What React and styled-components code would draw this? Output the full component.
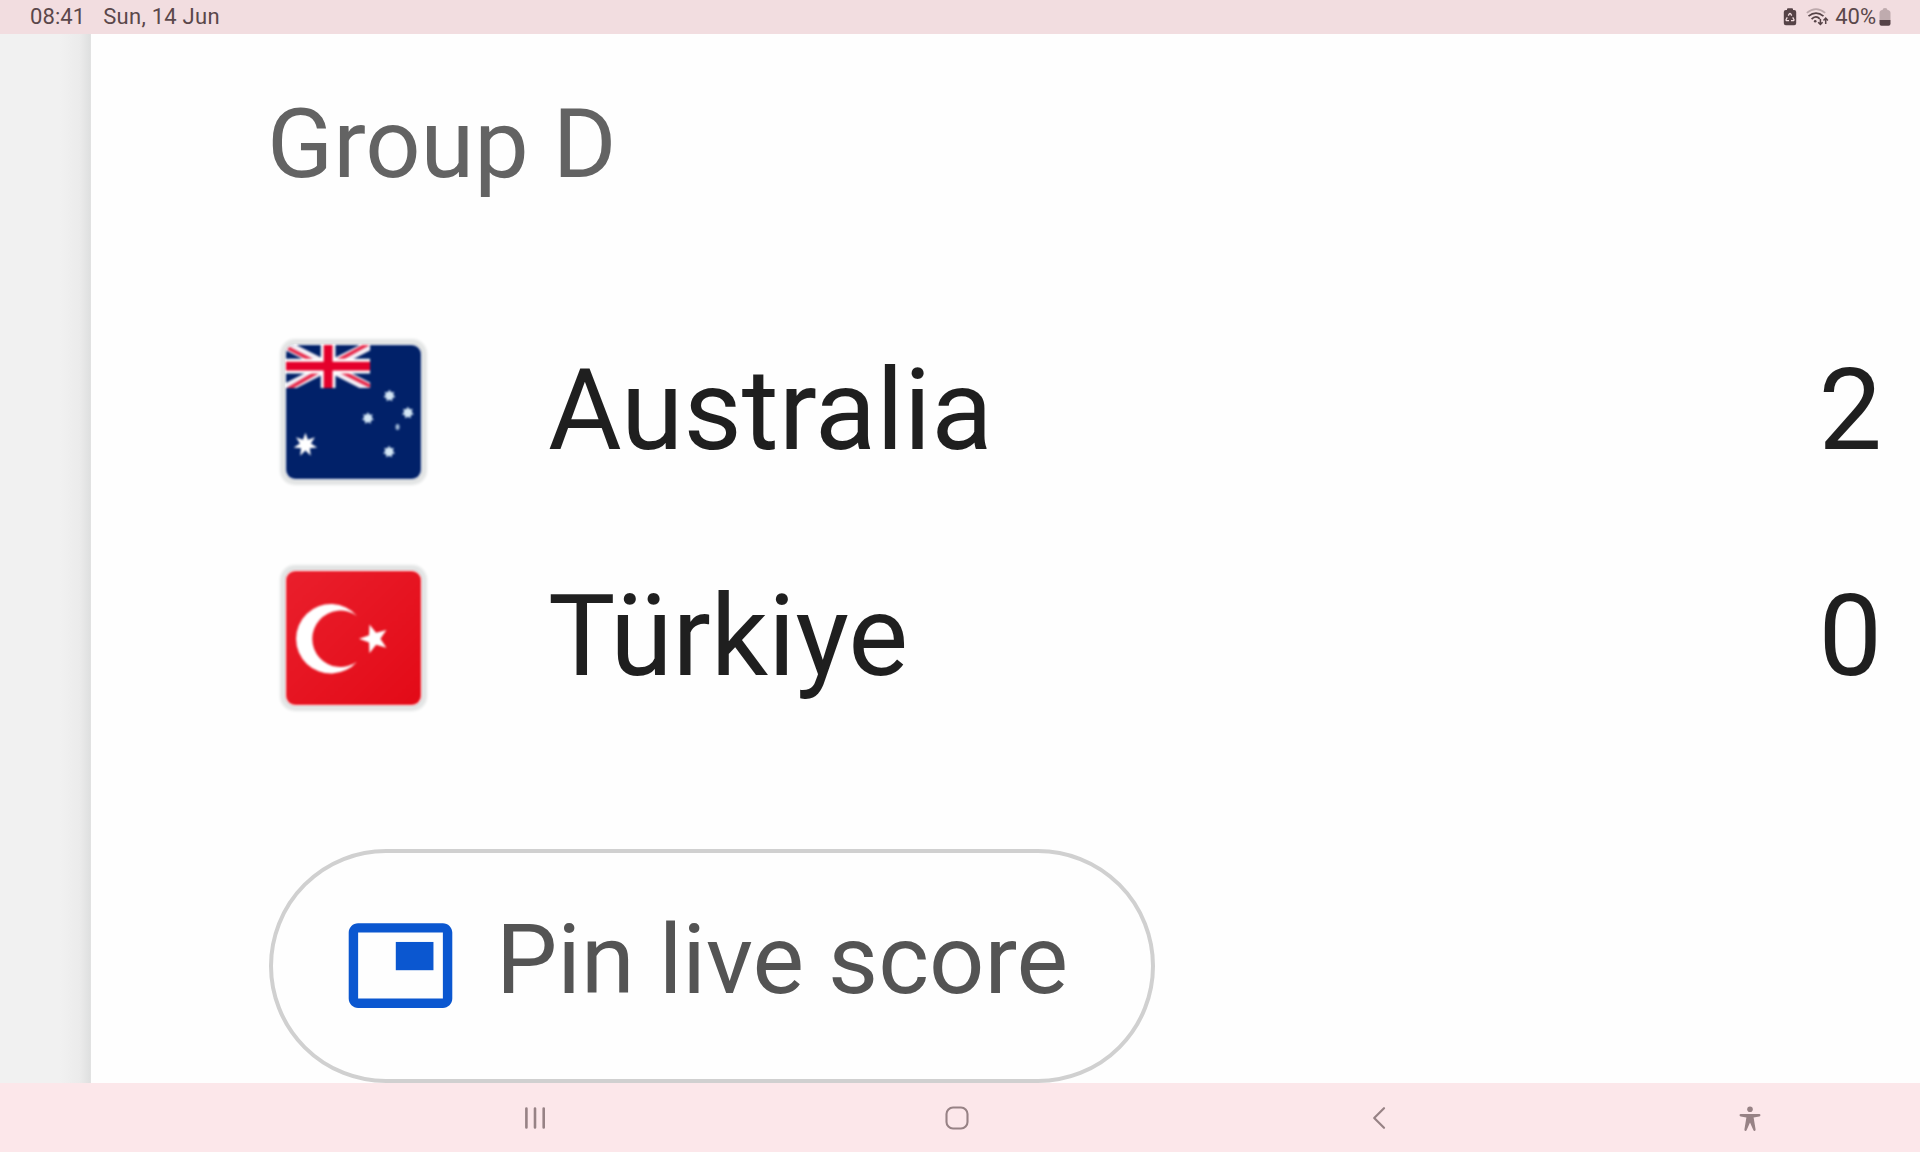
import React from 'react';
import styled, { createGlobalStyle } from 'styled-components';

const starPoints = (cx, cy, outer, inner, tips, start = -90) => {
  const points = [];
  for (let i = 0; i < tips * 2; i++) {
    const r = i % 2 === 0 ? outer : inner;
    const angle = ((start + (i * 180) / tips) * Math.PI) / 180;
    points.push(`${(cx + r * Math.cos(angle)).toFixed(2)},${(cy + r * Math.sin(angle)).toFixed(2)}`);
  }
  return points.join(' ');
};

const AustraliaFlag = () => (
  <FlagArt viewBox="0 0 134 133" preserveAspectRatio="none">
    <defs>
      <clipPath id="canton">
        <rect width="83.5" height="42.7" />
      </clipPath>
    </defs>
    <rect width="134" height="133" fill="#012169" />
    <g clipPath="url(#canton)">
      <path d="M0 0L83.5 42.7M83.5 0L0 42.7" stroke="#f3eef5" strokeWidth="9.5" />
      <path d="M0 2L38 21.4M83.5 40.7L45 21.4M81.5 -1L45 19M2 43.7L38 23" stroke="#e8294a" strokeWidth="3.6" />
      <path d="M41.8 0V42.7M0 21H83.5" stroke="#fff" strokeWidth="14.6" />
      <path d="M41.8 0V42.7M0 21H83.5" stroke="#e4002b" strokeWidth="8.8" />
    </g>
    <polygon points={starPoints(19.3, 99, 12, 5.6, 7)} fill="#fff" />
    <g fill="#d3e6f5">
      <polygon points={starPoints(102.7, 50.3, 6, 3.8, 7)} />
      <polygon points={starPoints(121, 67.3, 6, 3.8, 7)} />
      <polygon points={starPoints(81.3, 72.7, 6, 3.8, 7)} />
      <polygon points={starPoints(102.3, 106, 6, 3.8, 7)} />
      <ellipse cx="110.7" cy="81.3" rx="2" ry="3" fill="#9fb9d8" />
    </g>
  </FlagArt>
);

const TurkiyeFlag = () => (
  <FlagArt viewBox="0 0 134 133" preserveAspectRatio="none">
    <defs>
      <linearGradient id="turkiyeRed" x1="0" y1="0" x2="1" y2="1">
        <stop offset="0" stopColor="#ea1f2c" />
        <stop offset="1" stopColor="#e30a17" />
      </linearGradient>
    </defs>
    <rect width="134" height="133" fill="url(#turkiyeRed)" />
    <path d="M70.5 44.6A34.5 34.5 0 1 0 70.5 90A28 28 0 1 1 70.5 44.6Z" fill="#fff" />
    <polygon points={starPoints(87.5, 67.3, 15, 6.2, 5, 180)} fill="#fff" />
  </FlagArt>
);

const PinIcon = () => (
  <PinSvg viewBox="0 0 24 24" fill="#0b57d0">
    <path d="M21 3H3c-1.1 0-2 .9-2 2v14c0 1.1.9 2 2 2h18c1.1 0 2-.9 2-2V5c0-1.1-.9-2-2-2zm0 16H3V5h18v14z" />
    <rect x="11" y="7" width="8" height="6" />
  </PinSvg>
);

const BatteryProtectIcon = () => (
  <svg width="14" height="18" viewBox="0 0 14 18">
    <path d="M4 2V1.2Q4 .3 5 .3h4Q10 .3 10 1.2V2h1.2Q13.2 2 13.2 4v11.2q0 2-2 2H2.8q-2 0-2-2V4q0-2 2-2z" fill="#564347" />
    <path
      d="M5.3 7.6L6.3 5.9Q7 5 7.7 5.9L8.7 7.6M9.7 9.4l1.2 2q.3 1.2-.9 1.3H8M6 12.7H4q-1.2-.1-.9-1.3L4.3 9.4"
      fill="none"
      stroke="#f2dde0"
      strokeWidth="1.3"
    />
  </svg>
);

const WifiIcon = () => (
  <svg width="24" height="18" viewBox="0 0 24 18" fill="none" stroke="#564347" strokeWidth="1.7">
    <path d="M.8 4.9Q10-2.6 19.2 4.9" stroke="#bda9ac" />
    <path d="M2.5 8.2Q10 2 17.5 8.2" />
    <path d="M5.6 11.2Q9.8 6.8 13.8 10.8" />
    <circle cx="9.2" cy="13.2" r="1.3" fill="#564347" stroke="none" />
    <path d="M14.4 11v5.4M12.2 14.2l2.2 2.3 2.2-2.3M19.7 16v-5.6M17.5 12.4l2.2-2.3 2.2 2.3" strokeWidth="1.5" />
  </svg>
);

const BatteryLevelIcon = () => (
  <svg width="12" height="18" viewBox="0 0 12 18">
    <path d="M3.5 2Q3.5 0 6 0t2.5 2Q11.5 2.3 11.5 5v7H.5V5Q.5 2.3 3.5 2z" fill="#bfabae" />
    <path d="M.5 12h11v3.7q0 2-2 2h-7q-2 0-2-2z" fill="#564347" />
  </svg>
);

const RecentsIcon = () => (
  <svg width="24" height="24" viewBox="0 0 24 24" stroke="#978285" strokeWidth="2.6" strokeLinecap="round">
    <path d="M3.4 2.5v19M12 2.5v19M20.7 2.5v19" />
  </svg>
);

const HomeIcon = () => (
  <svg width="24" height="24" viewBox="0 0 24 24" fill="none" stroke="#978285" strokeWidth="2.1">
    <rect x="1.5" y="1.5" width="21" height="21" rx="6.5" />
  </svg>
);

const BackIcon = () => (
  <svg width="24" height="24" viewBox="0 0 24 24" fill="none" stroke="#978285" strokeWidth="2.2" strokeLinecap="round" strokeLinejoin="round">
    <path d="M17 2.2L7.2 12 17 21.8" />
  </svg>
);

const AccessibilityIcon = () => (
  <svg width="24" height="28" viewBox="0 0 24 28" fill="#978285">
    <circle cx="12" cy="5.2" r="2.8" />
    <path d="M2.7 10.1H21.3a1.1 1.1 0 0 1 0 2.3L15.6 13.4 17.6 25.5q.1 1.3-.9 1.6-1 .1-1.4-1L12 18.5 8.7 26.1q-.4 1.1-1.4 1-1-.3-.9-1.6L8.4 13.4 2.7 12.4a1.1 1.1 0 0 1 0-2.3z" />
  </svg>
);

const teams = [
  { name: 'Australia', score: 2, Flag: AustraliaFlag },
  { name: 'Türkiye', score: 0, Flag: TurkiyeFlag },
];

const App = () => {
  return (
    <>
      <GlobalStyle />
      <Screen>
        <StatusBar>
          <StatusText>08:41</StatusText>
          <StatusDate>Sun, 14 Jun</StatusDate>
          <StatusIcons>
            <BatteryProtectIcon />
            <WifiIcon />
            <BatteryText>40%</BatteryText>
            <BatteryLevelIcon />
          </StatusIcons>
        </StatusBar>
        <Content>
          <Gutter />
          <Card>
            <GroupTitle>Group D</GroupTitle>
            <TeamList>
              {teams.map(({ name, score, Flag }) => (
                <TeamRow key={name}>
                  <FlagFrame>
                    <Flag />
                  </FlagFrame>
                  <TeamName>{name}</TeamName>
                  <Score>{score}</Score>
                </TeamRow>
              ))}
            </TeamList>
            <PinButton type="button">
              <PinIcon />
              <PinLabel>Pin live score</PinLabel>
            </PinButton>
          </Card>
        </Content>
        <NavBar>
          <NavButton aria-label="Recents"><RecentsIcon /></NavButton>
          <NavButton aria-label="Home"><HomeIcon /></NavButton>
          <NavButton aria-label="Back"><BackIcon /></NavButton>
          <NavButton aria-label="Accessibility"><AccessibilityIcon /></NavButton>
        </NavBar>
      </Screen>
    </>
  );
};

const GlobalStyle = createGlobalStyle`
  * {
    box-sizing: border-box;
  }
  body {
    margin: 0;
    font-family: Roboto, 'Liberation Sans', sans-serif;
  }
  svg {
    display: block;
    flex-shrink: 0;
  }
`;

const Screen = styled.div`
  display: flex;
  flex-direction: column;
  width: 1920px;
  height: 1152px;
  overflow: hidden;
  background: #fff;
`;

const StatusBar = styled.header`
  display: flex;
  align-items: center;
  flex-shrink: 0;
  height: 34px;
  padding: 0 29px 0 30px;
  background: #f2dde0;
  color: #5a474a;
`;

const StatusText = styled.span`
  font-size: 22px;
  line-height: 34px;
  letter-spacing: 0.1px;
`;

const StatusDate = styled(StatusText)`
  margin-left: 18px;
  letter-spacing: 0.25px;
`;

const StatusIcons = styled.div`
  display: flex;
  align-items: center;
  margin-left: auto;
  gap: 9px;
`;

const BatteryText = styled(StatusText)`
  margin: 0 -6px 0 -4px;
  letter-spacing: 0;
`;

const Content = styled.main`
  display: flex;
  flex-shrink: 0;
  height: 1049px;
`;

const Gutter = styled.div`
  width: 91px;
  flex-shrink: 0;
  background: linear-gradient(to right, #f1f1f1 60px, #ebebeb 80px, #dfe0e0 90px, #e4e4e4 91px);
`;

const Card = styled.section`
  flex: 1;
  padding: 50px 38px 0 178px;
  background: #fefefe;
`;

const GroupTitle = styled.h1`
  margin: 0 0 0 -2px;
  font-size: 97.2px;
  font-weight: 400;
  line-height: 120px;
  color: #636363;
`;

const TeamList = styled.div`
  margin-top: 94px;
`;

const TeamRow = styled.div`
  display: flex;
  align-items: center;
  height: 226px;
  padding-left: 17px;
`;

const FlagFrame = styled.div`
  width: 135px;
  height: 134px;
  flex-shrink: 0;
  margin-top: 2px;
  border-radius: 9px;
  background: #fff;
  box-shadow: 0 0 0 1px #f4f5f5, 0 0 3px 6px #e3e5e5;
`;

const FlagArt = styled.svg`
  width: 100%;
  height: 100%;
  border-radius: 9px;
  filter: blur(1.1px);
`;

const TeamName = styled.div`
  margin-left: 127px;
  font-size: 113px;
  line-height: 132px;
  color: #1f1f1f;
`;

const Score = styled.div`
  margin-left: auto;
  font-size: 113px;
  line-height: 132px;
  color: #1f1f1f;
`;

const PinButton = styled.button`
  display: flex;
  align-items: center;
  width: 886px;
  height: 234px;
  margin-top: 99px;
  padding: 0 0 0 71px;
  border: 4px solid #d0d0d0;
  border-radius: 117px;
  background: transparent;
  font-family: inherit;
`;

const PinSvg = styled.svg`
  width: 113px;
  height: 113px;
  margin-bottom: 2px;
`;

const PinLabel = styled.span`
  margin-left: 39px;
  padding-bottom: 12px;
  font-size: 97.2px;
  line-height: 120px;
  white-space: nowrap;
  color: #545454;
`;

const NavBar = styled.nav`
  display: grid;
  grid-template-columns: 422px 422px 422px 320px;
  align-items: center;
  flex: 1;
  padding-left: 324px;
  background: #fce7ea;
`;

const NavButton = styled.button`
  display: flex;
  justify-content: center;
  padding: 0;
  border: none;
  background: none;
`;

export default App;
